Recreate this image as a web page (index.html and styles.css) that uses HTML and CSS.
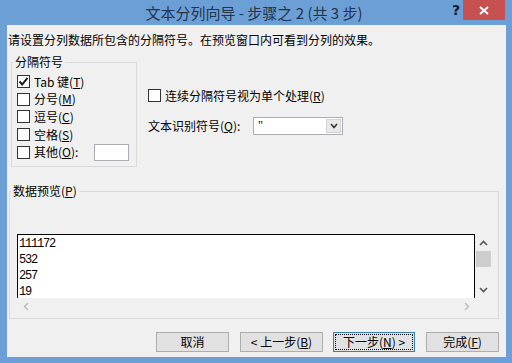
FILE: index.html
```html
<!DOCTYPE html>
<html>
  <head>
    <title>文本分列向导</title>
    <link rel="stylesheet" href="styles.css">
  </head>
  <body>
    <div class="window">
      <div class="titlebar">
        <div class="title">文本分列向导 - 步骤之 2 (共 3 步)</div>
        <div class="tb-buttons">
          <span class="tb-question">?</span>
          <span class="tb-close">
            <svg width="10" height="9" viewBox="0 0 10 9">
              <path d="M1 1 L9 8 M9 1 L1 8" stroke="#fff" stroke-width="2" fill="none"/>
            </svg>
          </span>
        </div>
      </div>

      <div class="content">
        <p class="intro">请设置分列数据所包含的分隔符号。在预览窗口内可看到分列的效果。</p>

        <div class="top">
          <div class="group delims">
            <span class="group-title">分隔符号</span>
            <div class="check-row">
              <span class="checkbox">
                <svg width="11" height="11" viewBox="0 0 11 11">
                  <path d="M1.5 5.5 L4.2 8.5 L9.5 1.8" stroke="#1a1a1a" stroke-width="2" fill="none"/>
                </svg>
              </span>
              <span>Tab 键(<u>T</u>)</span>
            </div>
            <div class="check-row">
              <span class="checkbox"></span>
              <span>分号(<u>M</u>)</span>
            </div>
            <div class="check-row">
              <span class="checkbox"></span>
              <span>逗号(<u>C</u>)</span>
            </div>
            <div class="check-row">
              <span class="checkbox"></span>
              <span>空格(<u>S</u>)</span>
            </div>
            <div class="check-row">
              <span class="checkbox"></span>
              <span>其他(<u>O</u>):</span>
              <span class="textbox"></span>
            </div>
          </div>

          <div class="options">
            <div class="check-row">
              <span class="checkbox"></span>
              <span>连续分隔符号视为单个处理(<u>R</u>)</span>
            </div>
            <div class="qualifier-row">
              <span class="qualifier-label">文本识别符号(<u>Q</u>):</span>
              <div class="combo">
                <span class="combo-value">"</span>
                <span class="combo-drop">
                  <svg width="8" height="6" viewBox="0 0 8 6">
                    <path d="M1 1 L4 4.5 L7 1" stroke="#333" stroke-width="1.6" fill="none"/>
                  </svg>
                </span>
              </div>
            </div>
          </div>
        </div>

        <div class="group preview">
          <span class="group-title">数据预览(<u>P</u>)</span>
          <div class="preview-box">
            <div class="preview-data">
              <div>111172</div>
              <div>532</div>
              <div>257</div>
              <div>19</div>
            </div>
            <div class="vscroll">
              <span class="arrow">
                <svg width="9" height="6" viewBox="0 0 9 6">
                  <path d="M1 5 L4.5 1.5 L8 5" stroke="#555" stroke-width="1.6" fill="none"/>
                </svg>
              </span>
              <span class="thumb"></span>
              <span class="arrow arrow-end">
                <svg width="9" height="6" viewBox="0 0 9 6">
                  <path d="M1 1 L4.5 4.5 L8 1" stroke="#555" stroke-width="1.6" fill="none"/>
                </svg>
              </span>
            </div>
            <div class="hscroll">
              <span class="arrow">
                <svg width="6" height="9" viewBox="0 0 6 9">
                  <path d="M5 1 L1.5 4.5 L5 8" stroke="#bbb" stroke-width="1.4" fill="none"/>
                </svg>
              </span>
              <span class="arrow">
                <svg width="6" height="9" viewBox="0 0 6 9">
                  <path d="M1 1 L4.5 4.5 L1 8" stroke="#bbb" stroke-width="1.4" fill="none"/>
                </svg>
              </span>
            </div>
          </div>
        </div>

        <div class="buttons">
          <div class="btn btn-cancel">取消</div>
          <div class="btn btn-back">&lt; 上一步(<u>B</u>)</div>
          <div class="btn btn-next">下一步(<u>N</u>) &gt;</div>
          <div class="btn btn-finish">完成(<u>F</u>)</div>
        </div>
      </div>
    </div>
  </body>
</html>
```

FILE: styles.css
```css
body {
  margin: 0;
  font-family: "Noto Sans CJK SC", "Liberation Sans", sans-serif;
  font-size: 12px;
  color: #000;
}

.window {
  width: 512px;
  height: 363px;
  background-color: #6c9fd6;
  display: flex;
  flex-direction: column;
}

.titlebar {
  height: 25px;
  display: flex;
  align-items: flex-start;
  padding-left: 59px;
  box-sizing: border-box;
}

.title {
  flex: 1 1 auto;
  text-align: center;
  font-size: 15px;
  line-height: 25px;
  color: #22344a;
}

.tb-buttons {
  display: flex;
  align-items: flex-start;
  margin-right: 7px;
}

.tb-question {
  width: 14px;
  height: 20px;
  line-height: 20px;
  font-family: "DejaVu Sans", sans-serif;
  font-size: 14px;
  font-weight: bold;
  color: #0e1c30;
  text-align: center;
}

.tb-close {
  width: 42px;
  height: 20px;
  background-color: #c75050;
  display: flex;
  align-items: center;
  justify-content: center;
}

.content {
  flex: 1;
  margin: 0 6px 6px 7px;
  background-color: #f0f0f0;
  display: flex;
  flex-direction: column;
}

.intro {
  margin: 8px 0 0 1px;
  line-height: 14px;
}

.top {
  display: flex;
  align-items: flex-start;
  margin-top: 15px;
}

.group {
  position: relative;
  border: 1px solid #d9d9d9;
  box-sizing: border-box;
}

.group-title {
  position: absolute;
  top: -8px;
  left: 1px;
  padding: 0 2px;
  line-height: 14px;
  background-color: #f0f0f0;
}

.delims {
  margin-left: 4px;
  width: 126px;
  height: 105px;
  padding: 10px 7px 0 5px;
}

.check-row {
  display: flex;
  align-items: center;
  height: 17.6px;
  gap: 4px;
  line-height: 14px;
}

.checkbox {
  width: 13px;
  height: 13px;
  box-sizing: border-box;
  border: 1px solid #333;
  background-color: #fff;
  display: flex;
  align-items: center;
  justify-content: center;
  flex-shrink: 0;
}

.textbox {
  margin-left: auto;
  width: 35px;
  height: 17px;
  box-sizing: border-box;
  border: 1px solid #abadb3;
  background-color: #fff;
}

.options {
  margin: 25px 0 0 11px;
}

.qualifier-row {
  display: flex;
  align-items: center;
  margin-top: 12px;
  height: 18px;
}

.qualifier-label {
  width: 105px;
}

.combo {
  width: 90px;
  height: 18px;
  box-sizing: border-box;
  border: 1px solid #abadb3;
  background-color: #fff;
  display: flex;
}

.combo-value {
  flex: 1;
  padding-left: 4px;
  line-height: 14px;
  font-family: "Liberation Serif", serif;
}

.combo-drop {
  width: 15px;
  margin: 1px;
  background-color: #e8e8e8;
  border: 1px solid #d4d4d4;
  box-sizing: border-box;
  display: flex;
  align-items: center;
  justify-content: center;
}

.preview {
  margin: 24px 0 0 2px;
  width: 490px;
  height: 128px;
  padding: 42px 6px 3px 7px;
}

.preview-box {
  display: grid;
  grid-template-columns: 458px 17px;
  grid-template-rows: 64px 17px;
}

.preview-data {
  background-color: #fff;
  border: 1px solid #000;
  border-bottom: none;
  padding: 1px 0 0 1px;
  overflow: hidden;
  font-family: "Liberation Mono", monospace;
  font-size: 12px;
  letter-spacing: -1.2px;
  line-height: 16px;
}

.vscroll {
  display: flex;
  flex-direction: column;
  align-items: center;
}

.vscroll .arrow {
  height: 17px;
  width: 17px;
  display: flex;
  align-items: center;
  justify-content: center;
}

.vscroll .arrow-end {
  margin-top: auto;
}

.thumb {
  width: 15px;
  height: 16px;
  background-color: #cdcdcd;
}

.hscroll {
  display: flex;
  justify-content: space-between;
}

.hscroll .arrow {
  width: 17px;
  height: 17px;
  display: flex;
  align-items: center;
  justify-content: center;
}

.buttons {
  display: flex;
  justify-content: flex-end;
  margin: 13px 7px 0 0;
}

.btn {
  height: 20px;
  box-sizing: border-box;
  border: 1px solid #adadad;
  background-color: #e1e1e1;
  line-height: 18px;
  text-align: center;
}

.btn-cancel {
  width: 73px;
}

.btn-back {
  width: 83px;
  margin-left: 11px;
}

.btn-next {
  width: 82px;
  margin-left: 10px;
  border-color: #3c7fb1;
  outline: 1px dotted #000;
  outline-offset: -3px;
}

.btn-finish {
  width: 73px;
  margin-left: 11px;
}
```
